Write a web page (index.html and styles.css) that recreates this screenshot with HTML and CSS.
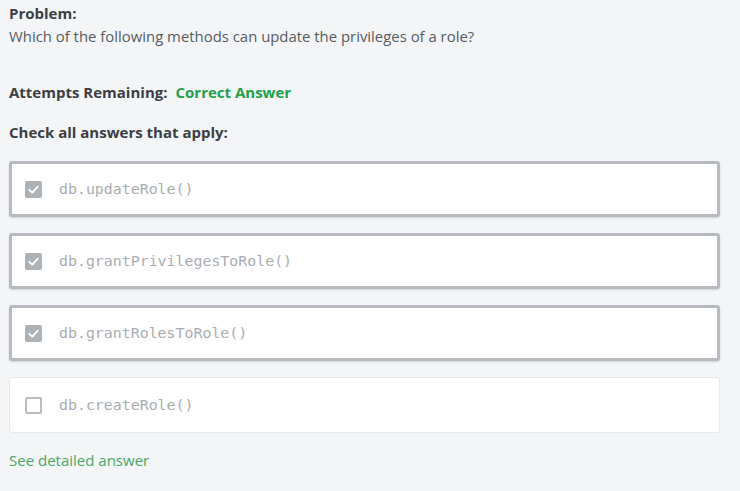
FILE: index.html
```html
<!DOCTYPE html>
<html>
<head>
<meta charset="utf-8">
<link rel="stylesheet" href="styles.css">
</head>
<body>
<div class="page">
  <div class="problem">
    <div class="label">Problem:</div>
    <div class="question">Which of the following methods can update the privileges of a role?</div>
  </div>
  <div class="attempts"><span class="label">Attempts Remaining:</span><span class="correct">Correct Answer</span></div>
  <div class="label check-all">Check all answers that apply:</div>
  <div class="options">
    <div class="option selected">
      <span class="box checked"><svg viewBox="0 0 17 17" width="17" height="17"><path d="M4.3 8.8 L7.3 11.6 L12.8 5.6" fill="none" stroke="#fff" stroke-width="1.8" stroke-linecap="round" stroke-linejoin="round"/></svg></span>
      <span class="code">db.updateRole()</span>
    </div>
    <div class="option selected">
      <span class="box checked"><svg viewBox="0 0 17 17" width="17" height="17"><path d="M4.3 8.8 L7.3 11.6 L12.8 5.6" fill="none" stroke="#fff" stroke-width="1.8" stroke-linecap="round" stroke-linejoin="round"/></svg></span>
      <span class="code">db.grantPrivilegesToRole()</span>
    </div>
    <div class="option selected">
      <span class="box checked"><svg viewBox="0 0 17 17" width="17" height="17"><path d="M4.3 8.8 L7.3 11.6 L12.8 5.6" fill="none" stroke="#fff" stroke-width="1.8" stroke-linecap="round" stroke-linejoin="round"/></svg></span>
      <span class="code">db.grantRolesToRole()</span>
    </div>
    <div class="option">
      <span class="box"></span>
      <span class="code">db.createRole()</span>
    </div>
  </div>
  <div class="detail">See detailed answer</div>
</div>
</body>
</html>
```
FILE: styles.css
```css
html, body {
  margin: 0;
  padding: 0;
  background: #f4f5f7;
}
.page {
  width: 711px;
  padding: 3px 0 0 9px;
  font-family: "Open Sans", Lato, sans-serif;
  color: #3c4146;
}
.label {
  font-weight: 700;
  font-size: 15px;
  line-height: 20px;
  color: #3a3f44;
}
.question {
  margin-top: 3px;
  font-size: 14.9px;
  line-height: 20px;
  color: #575d63;
}
.attempts {
  margin-top: 36px;
  display: flex;
  gap: 8px;
  line-height: 20px;
}
.correct {
  font-weight: 700;
  font-size: 15px;
  color: #22a04b;
}
.check-all {
  margin-top: 20px;
}
.options {
  margin-top: 19px;
  display: flex;
  flex-direction: column;
  gap: 16px;
}
.option {
  height: 56px;
  box-sizing: border-box;
  background: #fff;
  border: 1px solid #e7e9eb;
  border-radius: 3px;
  display: flex;
  align-items: center;
  padding-left: 15px;
}
.option.selected {
  border: 3px solid #b7bbbf;
  padding-left: 13px;
  box-shadow: 0 1px 2px rgba(0,0,0,0.15);
}
.box {
  width: 17px;
  height: 17px;
  box-sizing: border-box;
  border: 2px solid #b9bcbf;
  border-radius: 2px;
  flex: none;
  display: flex;
}
.box.checked {
  border: none;
  background: #adb2b7;
}
.code {
  margin-left: 17px;
  font-family: "DejaVu Sans Mono", "Liberation Mono", monospace;
  font-size: 14.9px;
  color: #a9adb1;
}
.detail {
  margin-top: 17px;
  font-size: 15px;
  line-height: 20px;
  color: #4aa765;
}
```
